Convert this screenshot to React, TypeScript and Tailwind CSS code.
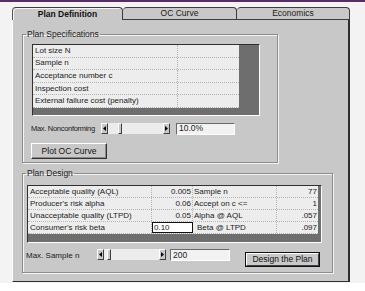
import React from "react";

const FONT = "font-['Liberation_Sans',Arial,sans-serif]";

type Row = { label: string; value?: string };

const specRows: Row[] = [
  { label: "Lot size N" },
  { label: "Sample n" },
  { label: "Acceptance number c" },
  { label: "Inspection cost" },
  { label: "External failure cost (penalty)" },
];

const designRows = [
  { a: "Acceptable quality (AQL)", av: "0.005", b: "Sample n", bv: "77" },
  { a: "Producer's risk alpha", av: "0.06", b: "Accept on c <=", bv: "1" },
  { a: "Unacceptable quality (LTPD)", av: "0.05", b: "Alpha @ AQL", bv: ".057" },
  { a: "Consumer's risk beta", av: "0.10", b: "Beta @ LTPD", bv: ".097", edit: true },
];

const Arrow = ({ dir }: { dir: "left" | "right" }) => (
  <div className="flex w-[7px] items-center justify-center border border-t-white border-l-white border-b-[#404040] border-r-[#404040] bg-[#c8c8c8]">
    <svg width="3" height="5" viewBox="0 0 3 5">
      {dir === "left" ? (
        <path d="M3 0 L0 2.5 L3 5 Z" fill="#000" />
      ) : (
        <path d="M0 0 L3 2.5 L0 5 Z" fill="#000" />
      )}
    </svg>
  </div>
);

const ScrollBar = ({ thumb }: { thumb: number }) => (
  <div className="flex h-[11px] w-[69px]">
    <Arrow dir="left" />
    <div
      className="flex flex-1 bg-[#ececec]"
      style={{ paddingLeft: thumb }}
    >
      <div className="w-[4px] border border-t-white border-l-white border-b-[#404040] border-r-[#404040] bg-[#c8c8c8]" />
    </div>
    <Arrow dir="right" />
  </div>
);

const TextBox = ({ value, w }: { value: string; w: string }) => (
  <div
    className={`${w} flex h-[12px] items-center border border-t-[#6a6a6a] border-l-[#6a6a6a] border-b-white border-r-white bg-[#f2f2f2] pl-[2px] text-[8.5px] leading-none text-[#1a1a1a]`}
  >
    {value}
  </div>
);

const Group = ({
  title,
  className,
  children,
}: {
  title: string;
  className: string;
  children: React.ReactNode;
}) => (
  <fieldset
    className={`${className} border border-[#8c8c8c] shadow-[inset_1px_1px_0_#f4f4f4,1px_1px_0_#f4f4f4]`}
  >
    <legend className="ml-[3px] px-[1px] text-[8.5px] leading-[10px] text-[#1a1a1a]">
      {title}
    </legend>
    {children}
  </fieldset>
);

export default function App() {
  return (
    <div className={`${FONT} h-[291px] w-[365px] overflow-hidden bg-white`}>
      <div className="h-[2px] bg-[#5b2a6c]" />
      <div className="flex h-[281px] bg-[#f3f3f3] pl-[12px] pt-[5px]">
        <div className="flex w-[338px] flex-col">
          {/* tabs */}
          <div className="flex h-[12px] items-end">
            <div className="relative z-10 -mb-px flex h-[13px] w-[111px] items-center justify-center rounded-t-[4px] border border-b-0 border-[#3c3c3c] border-l-[#555] bg-[#c8c8c8] text-[8.5px] font-bold leading-none text-[#111] shadow-[inset_1px_1px_0_#f4f4f4]">
              Plan Definition
            </div>
            <div className="flex h-[12px] w-[114px] items-center justify-center rounded-t-[4px] border border-b-0 border-l-0 border-[#3c3c3c] bg-[#c8c8c8] text-[8.5px] leading-none text-[#1a1a1a]">
              OC Curve
            </div>
            <div className="flex h-[12px] w-[113px] items-center justify-center rounded-t-[4px] border border-b-0 border-l-0 border-[#3c3c3c] bg-[#c8c8c8] text-[8.5px] leading-none text-[#1a1a1a]">
              Economics
            </div>
          </div>

          {/* body */}
          <div className="flex h-[263px] flex-col border border-t-[#3c3c3c] border-l-white border-r-2 border-r-[#2e2e2e] border-b-[#2e2e2e] bg-[#c8c8c8] pl-[9px] pt-[9px]">
            <Group title="Plan Specifications" className="h-[134px] w-[256px]">
              <div className="ml-[9px] mt-[5px] flex h-[72px] w-[228px] flex-col border border-t-[#303030] border-l-[#303030] border-b-white border-r-white bg-[#6e6e6e]">
                {specRows.map((r) => (
                  <div
                    key={r.label}
                    className="flex h-[12.6px] w-[206px] border-b border-dotted border-[#b4b4b4] bg-[#ededed] text-[8px] leading-none text-[#1a1a1a]"
                  >
                    <div className="flex w-[145px] items-center border-r border-dotted border-[#b4b4b4] pl-[2px]">
                      {r.label}
                    </div>
                    <div className="flex-1" />
                  </div>
                ))}
              </div>

              <div className="ml-[8px] mt-[7px] flex h-[11px] items-center">
                <div className="w-[70px] whitespace-nowrap text-[7.5px] leading-none tracking-[-0.3px] text-[#1a1a1a]">
                  Max. Nonconforming
                </div>
                <ScrollBar thumb={10} />
                <div className="ml-[6px]">
                  <TextBox value="10.0%" w="w-[59px]" />
                </div>
              </div>

              <button className="ml-[8px] mt-[9px] flex h-[16px] w-[76px] items-center justify-center border border-t-white border-l-white border-b-[#303030] border-r-[#303030] bg-[#c8c8c8] text-[8.5px] leading-none text-[#111] shadow-[inset_-1px_-1px_0_#8a8a8a]">
                Plot OC Curve
              </button>
            </Group>

            <Group title="Plan Design" className="mt-[5px] h-[105px] w-[311px]">
              <div className="ml-[4px] mt-[7px] flex h-[58px] w-[295px] flex-col border border-t-[#303030] border-l-[#303030] border-b-white border-r-white bg-[#6e6e6e]">
                {designRows.map((r) => (
                  <div
                    key={r.a}
                    className="flex h-[12px] w-[290px] border-b border-dotted border-[#b4b4b4] bg-[#ededed] text-[8px] leading-none text-[#1a1a1a]"
                  >
                    <div className="flex w-[124px] items-center border-r border-dotted border-[#b4b4b4] pl-[2px]">
                      {r.a}
                    </div>
                    {r.edit ? (
                      <div className="flex w-[41px] items-center border border-[#111] bg-white pl-[1px]">
                        {r.av}
                      </div>
                    ) : (
                      <div className="flex w-[41px] items-center justify-end border-r border-dotted border-[#b4b4b4] pr-[1px]">
                        {r.av}
                      </div>
                    )}
                    <div
                      className={`flex w-[84px] items-center border-r border-dotted border-[#b4b4b4] ${
                        r.edit ? "pl-[4px]" : "pl-[1px]"
                      }`}
                    >
                      {r.b}
                    </div>
                    <div className="flex flex-1 items-center justify-end pr-[1px]">
                      {r.bv}
                    </div>
                  </div>
                ))}
              </div>

              <div className="ml-[3px] mt-[6px] flex h-[18px] items-start">
                <div className="mt-[3px] w-[71px] whitespace-nowrap text-[8px] leading-none text-[#1a1a1a]">
                  Max. Sample n
                </div>
                <ScrollBar thumb={3} />
                <div className="ml-[4px]">
                  <TextBox value="200" w="w-[60px]" />
                </div>
                <div className="ml-[15px] mt-[3px] border border-[#111]">
                  <button className="flex h-[13px] w-[73px] items-center justify-center border border-t-white border-l-white border-b-[#404040] border-r-[#404040] bg-[#c8c8c8] text-[8.5px] leading-none text-[#111]">
                    Design the Plan
                  </button>
                </div>
              </div>
            </Group>
          </div>
        </div>
      </div>
    </div>
  );
}
